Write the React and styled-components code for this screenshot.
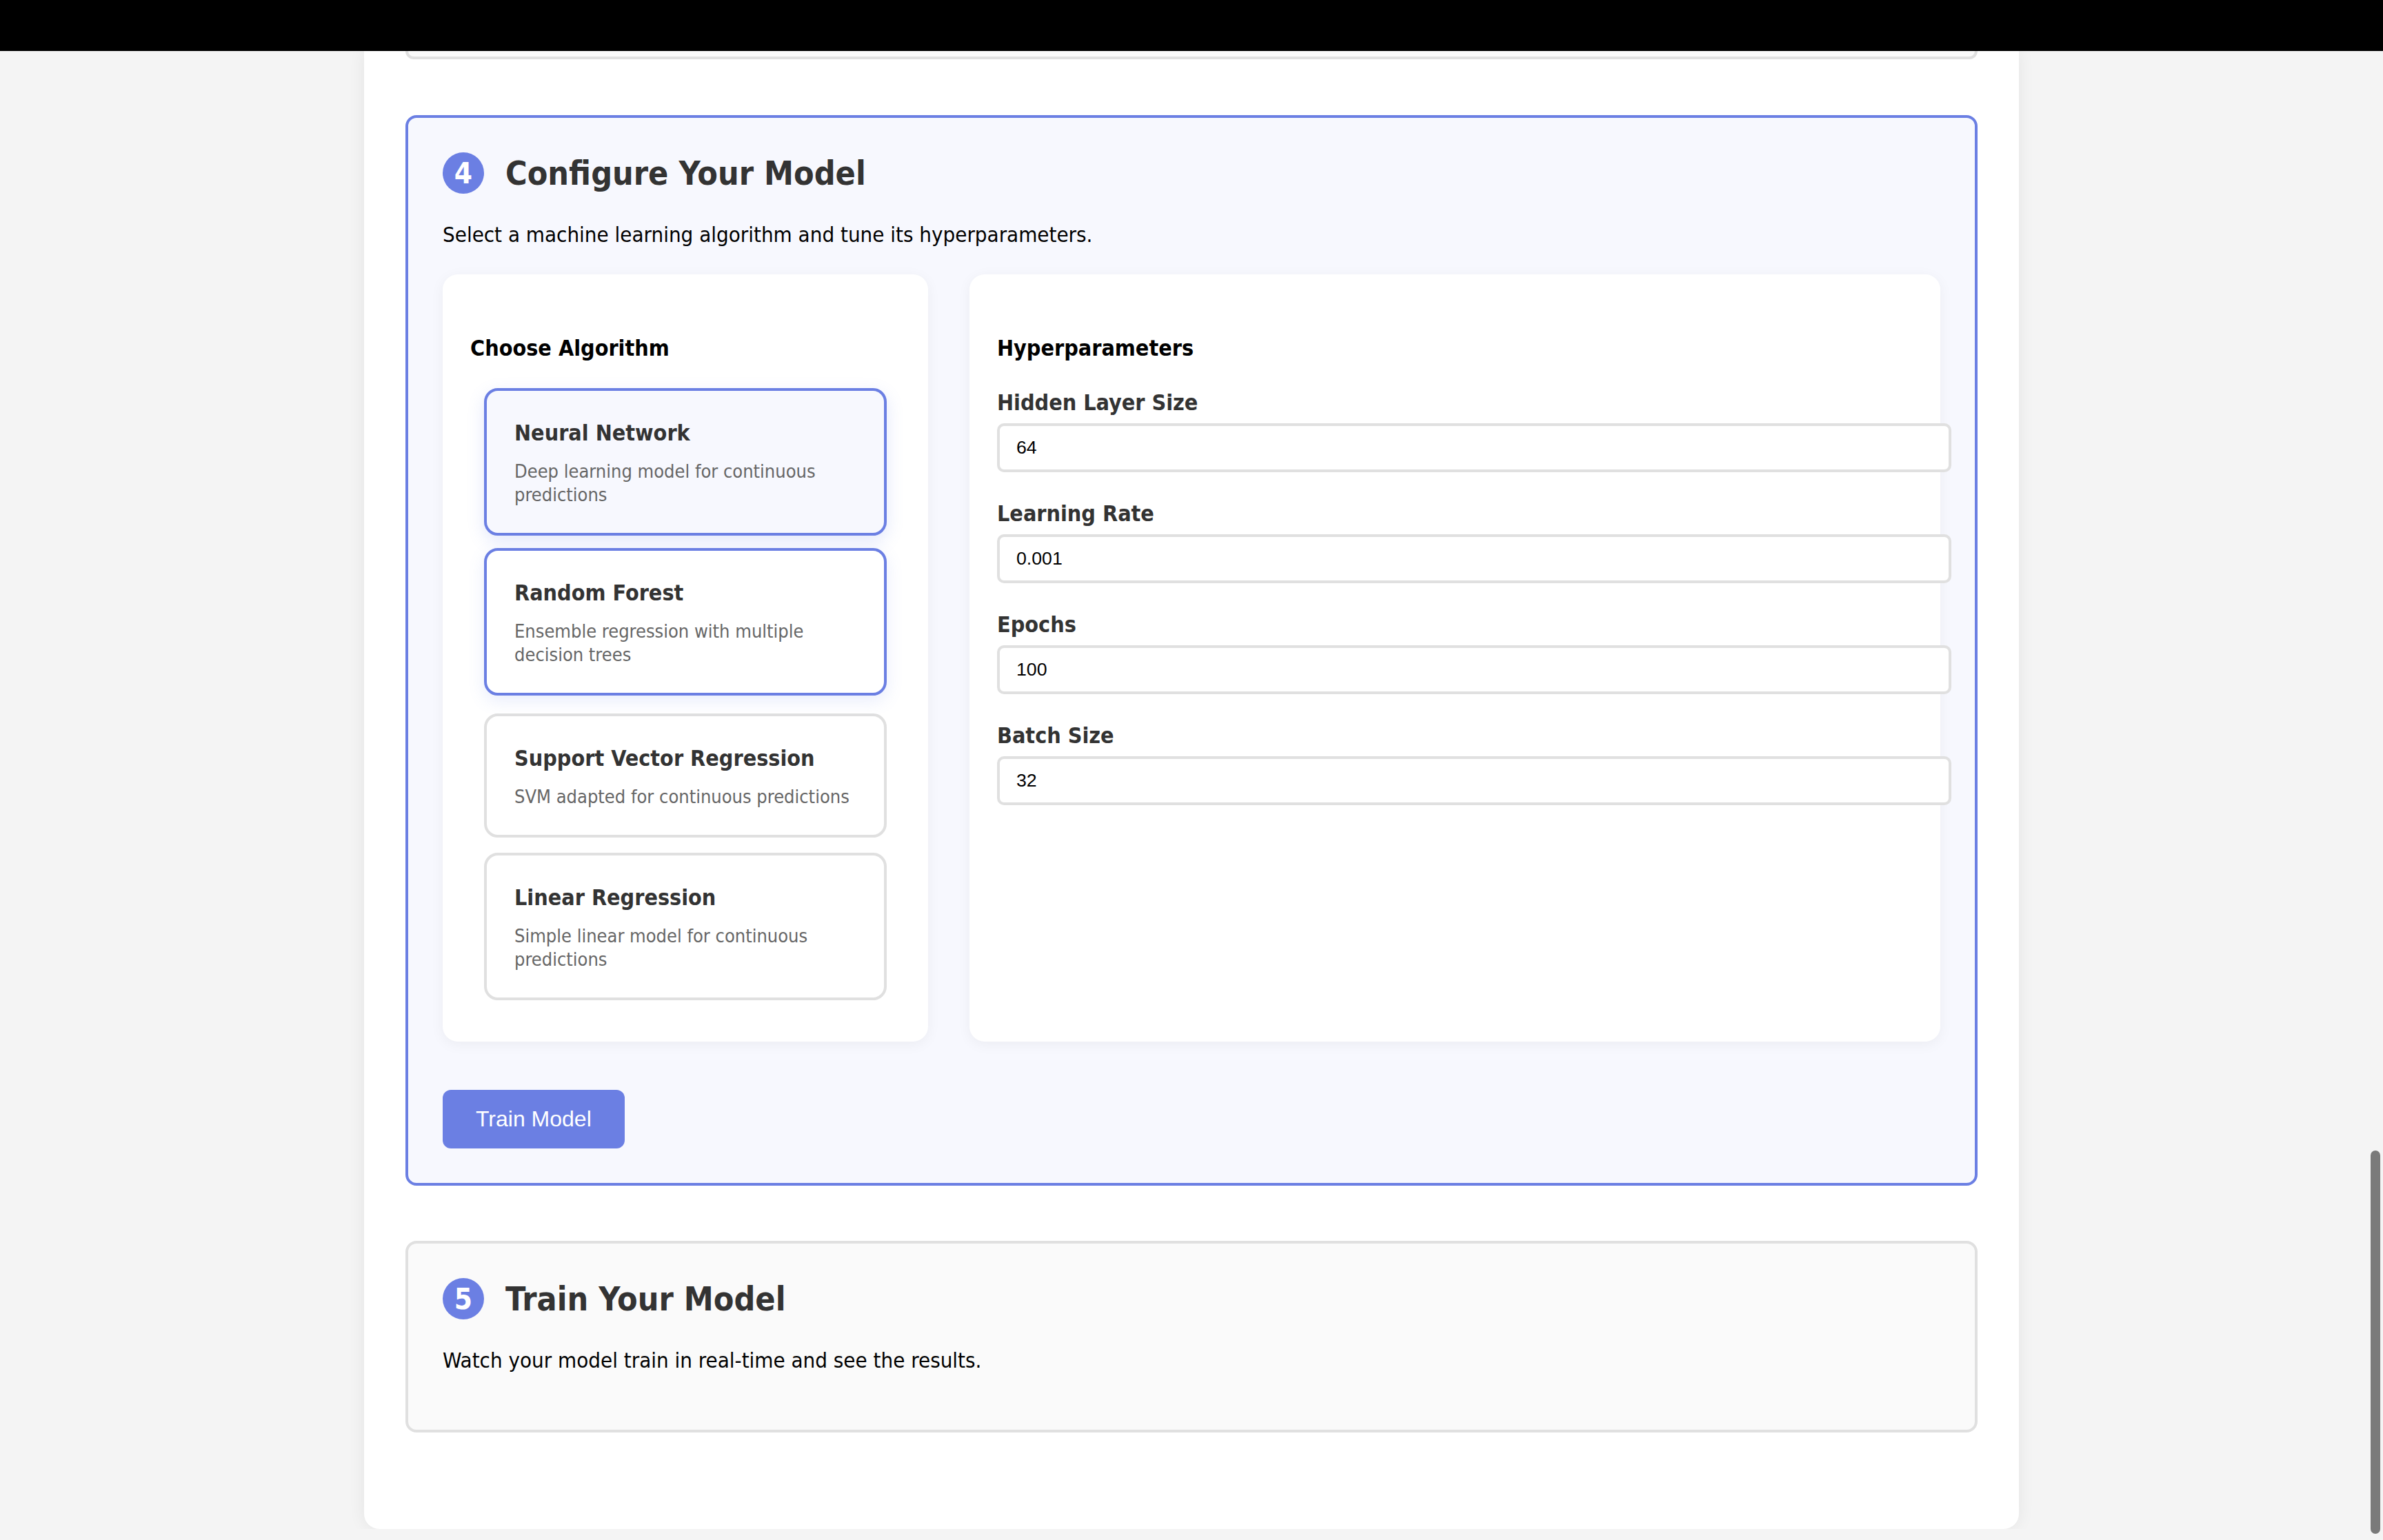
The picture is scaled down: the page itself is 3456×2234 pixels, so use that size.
import React from "react";
import styled, { createGlobalStyle, css } from "styled-components";

const ACCENT = "#6b7fe3";
const UI_FONT = `"DejaVu Sans Condensed", "DejaVu Sans", Verdana, sans-serif`;
const FORM_FONT = `"Liberation Sans", Arial, sans-serif`;

const GlobalStyle = createGlobalStyle`
  html, body {
    margin: 0;
    padding: 0;
    background: #f4f4f4;
    font-family: ${UI_FONT};
    color: #000;
  }
  * { box-sizing: border-box; }
`;

const TopBar = styled.div`
  height: 74px;
  background: #000;
`;

const Container = styled.main`
  width: 2400px;
  margin: 0 auto;
  background: #fff;
  padding: 0 60px 60px;
  border-radius: 0 0 22px 22px;
  box-shadow: 0 0 24px rgba(0, 0, 0, 0.07);
`;

const ClippedTail = styled.div`
  height: 12px;
  background: #fafafa;
  border: 4px solid #e0e0e0;
  border-top: none;
  border-radius: 0 0 16px 16px;
  margin-bottom: 81px;
`;

const Section = styled.section`
  border: 4px solid ${(p) => (p.$active ? ACCENT : "#e0e0e0")};
  background: ${(p) => (p.$active ? "#f7f8fe" : "#fafafa")};
  border-radius: 16px;
  padding: 50px;
  margin-bottom: 80px;
`;

const SectionHeader = styled.div`
  display: flex;
  align-items: center;
  gap: 31px;
`;

const StepBadge = styled.div`
  width: 60px;
  height: 60px;
  border-radius: 50%;
  background: ${ACCENT};
  color: #fff;
  font-weight: bold;
  font-size: 42px;
  display: flex;
  align-items: center;
  justify-content: center;
  flex-shrink: 0;
`;

const SectionTitle = styled.h2`
  margin: 0;
  font-size: 48px;
  line-height: 60px;
  font-weight: bold;
  color: #333;
`;

const SectionText = styled.p`
  margin: 40px 0 32px;
  font-size: 31px;
  line-height: 38px;
  color: #000;
`;

const ConfigGrid = styled.div`
  display: grid;
  grid-template-columns: 1fr 2fr;
  gap: 60px;
  margin-top: 39px;
`;

const Panel = styled.div`
  background: #fff;
  border-radius: 22px;
  padding: 40px 40px 60px;
  box-shadow: 0 4px 20px rgba(0, 0, 0, 0.05);
`;

const PanelTitle = styled.h3`
  margin: 48px 0 0;
  font-size: 32px;
  line-height: 39px;
  font-weight: bold;
  color: #000;
`;

const CardList = styled.div`
  display: flex;
  flex-direction: column;
  gap: 22px;
  margin-top: 38px;
  padding: 0 20px;
`;

const AlgoCard = styled.div`
  border: 4px solid #e0e0e0;
  border-radius: 20px;
  padding: 42px 40px 38px;
  background: #fff;
  cursor: pointer;
  ${(p) =>
    p.$selected &&
    css`
      border-color: ${ACCENT};
      background: #f7f8fe;
      box-shadow: 0 8px 24px rgba(102, 126, 234, 0.18);
    `}
  ${(p) =>
    p.$hovered &&
    css`
      border-color: ${ACCENT};
      transform: translateY(-4px);
      box-shadow: 0 8px 24px rgba(102, 126, 234, 0.14);
    `}
`;

const AlgoName = styled.div`
  font-size: 32px;
  line-height: 39px;
  font-weight: bold;
  color: #333;
`;

const AlgoDesc = styled.div`
  margin-top: 19px;
  font-size: 27px;
  line-height: 34px;
  color: #666;
`;

const ParamList = styled.div`
  display: flex;
  flex-direction: column;
  gap: 41px;
  margin-top: 40px;
`;

const FormGroup = styled.div`
  display: flex;
  flex-direction: column;
`;

const Label = styled.label`
  font-size: 32px;
  line-height: 39px;
  font-weight: bold;
  color: #333;
  margin-bottom: 10px;
`;

const Input = styled.input`
  box-sizing: content-box;
  width: 100%;
  padding: 16px 24px;
  border: 4px solid #e0e0e0;
  border-radius: 10px;
  font-family: ${FORM_FONT};
  font-size: 26.67px;
  color: #000;
  background: #fff;
  outline: none;
`;

const PrimaryButton = styled.button`
  margin-top: 70px;
  background: ${ACCENT};
  color: #fff;
  border: none;
  border-radius: 12px;
  padding: 24px 48px;
  font-family: ${FORM_FONT};
  font-size: 32px;
  line-height: 37px;
  cursor: pointer;
`;

const ScrollThumb = styled.div`
  position: fixed;
  right: 4px;
  top: 1669px;
  width: 14px;
  height: 556px;
  border-radius: 7px;
  background: #7a7a7a;
`;

const algorithms = [
  { name: "Neural Network", desc: "Deep learning model for continuous predictions", selected: true },
  { name: "Random Forest", desc: "Ensemble regression with multiple decision trees", hovered: true },
  { name: "Support Vector Regression", desc: "SVM adapted for continuous predictions" },
  { name: "Linear Regression", desc: "Simple linear model for continuous predictions" },
];

const params = [
  { label: "Hidden Layer Size", value: "64" },
  { label: "Learning Rate", value: "0.001" },
  { label: "Epochs", value: "100" },
  { label: "Batch Size", value: "32" },
];

export default function App() {
  return (
    <>
      <GlobalStyle />
      <TopBar />
      <Container>
        <ClippedTail />
        <Section $active>
          <SectionHeader>
            <StepBadge>4</StepBadge>
            <SectionTitle>Configure Your Model</SectionTitle>
          </SectionHeader>
          <SectionText>Select a machine learning algorithm and tune its hyperparameters.</SectionText>
          <ConfigGrid>
            <Panel>
              <PanelTitle>Choose Algorithm</PanelTitle>
              <CardList>
                {algorithms.map((a) => (
                  <AlgoCard key={a.name} $selected={a.selected} $hovered={a.hovered}>
                    <AlgoName>{a.name}</AlgoName>
                    <AlgoDesc>{a.desc}</AlgoDesc>
                  </AlgoCard>
                ))}
              </CardList>
            </Panel>
            <Panel>
              <PanelTitle>Hyperparameters</PanelTitle>
              <ParamList>
                {params.map((p) => (
                  <FormGroup key={p.label}>
                    <Label>{p.label}</Label>
                    <Input type="text" defaultValue={p.value} />
                  </FormGroup>
                ))}
              </ParamList>
            </Panel>
          </ConfigGrid>
          <PrimaryButton>Train Model</PrimaryButton>
        </Section>
        <Section>
          <SectionHeader>
            <StepBadge>5</StepBadge>
            <SectionTitle>Train Your Model</SectionTitle>
          </SectionHeader>
          <SectionText>Watch your model train in real-time and see the results.</SectionText>
        </Section>
      </Container>
      <ScrollThumb />
    </>
  );
}
